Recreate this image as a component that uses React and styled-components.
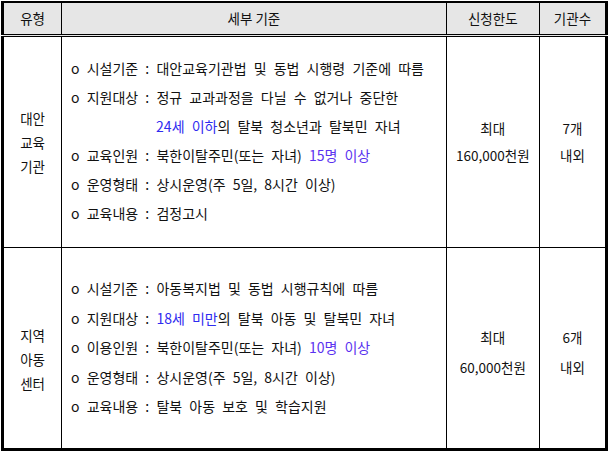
import React from "react";
import styled, { createGlobalStyle } from "styled-components";

const Global = createGlobalStyle`
  html, body { margin: 0; padding: 0; background: #fff; }
  body { font-family: "Noto Sans CJK KR", "Noto Sans", sans-serif; color: #111; }
`;

const Page = styled.div`
  padding: 1px 0 0 1px;
`;

const Table = styled.table`
  border-collapse: collapse;
  table-layout: fixed;
  width: 607px;
  border-left: 3px solid #000;
  border-right: 3px solid #000;
  border-top: 2px solid #000;
  border-bottom: 3px solid #000;
  font-size: 13.5px;
`;

const Th = styled.th`
  background: #e6e6e6;
  font-weight: 400;
  height: 31px;
  padding: 0;
  text-align: center;
  border-left: 1px solid #000;
  border-bottom: 3px double #000;
  line-height: 1;
  &:first-child { border-left: none; }
`;

const Td = styled.td`
  border-left: 1px solid #000;
  border-top: 1px solid #000;
  padding: 0;
  vertical-align: middle;
  text-align: center;
  height: ${(p) => p.$h}px;
  &:first-child { border-left: none; }
`;

const Stack = styled.div`
  display: flex;
  flex-direction: column;
  align-items: center;
  line-height: ${(p) => p.$lh}px;
  transform: translateY(${(p) => p.$dy || 0}px);
`;

const Content = styled.div`
  display: flex;
  flex-direction: column;
  text-align: left;
  padding-left: 9px;
  font-size: 14px;
  line-height: ${(p) => p.$lh}px;
  word-spacing: 4px;
  transform: translateY(${(p) => p.$dy || 0}px);
`;

const Line = styled.div`
  white-space: nowrap;
  padding-left: ${(p) => p.$indent || 0}px;
`;

const Age = styled.span`
  color: #2f2cf0;
`;

const Count = styled.span`
  color: #5a32f0;
`;

const rows = [
  {
    type: ["대안", "교육", "기관"],
    height: 210,
    lh: 29,
    contentDy: -1,
    lines: [
      <>o 시설기준 : 대안교육기관법 및 동법 시행령 기준에 따름</>,
      <>o 지원대상 : 정규 교과과정을 다닐 수 없거나 중단한</>,
      { indent: 85, node: <><Age>24세 이하</Age>의 탈북 청소년과 탈북민 자녀</> },
      <>o 교육인원 : 북한이탈주민(또는 자녀) <Count>15명 이상</Count></>,
      <>o 운영형태 : 상시운영(주 5일, 8시간 이상)</>,
      <>o 교육내용 : 검정고시</>,
    ],
    limit: ["최대", "160,000천원"],
    limitLh: 27,
    count: ["7개", "내외"],
  },
  {
    type: ["지역", "아동", "센터"],
    height: 200,
    lh: 29.5,
    typeDy: 11,
    lines: [
      <>o 시설기준 : 아동복지법 및 동법 시행규칙에 따름</>,
      <>o 지원대상 : <Age>18세 미만</Age>의 탈북 아동 및 탈북민 자녀</>,
      <>o 이용인원 : 북한이탈주민(또는 자녀) <Count>10명 이상</Count></>,
      <>o 운영형태 : 상시운영(주 5일, 8시간 이상)</>,
      <>o 교육내용 : 탈북 아동 보호 및 학습지원</>,
    ],
    limit: ["최대", "60,000천원"],
    limitLh: 30,
    limitDy: 4,
    count: ["6개", "내외"],
  },
];

export default function App() {
  return (
    <Page>
      <Global />
      <Table>
        <colgroup>
          <col style={{ width: 59 }} />
          <col style={{ width: 384 }} />
          <col style={{ width: 93 }} />
          <col style={{ width: 67 }} />
        </colgroup>
        <thead>
          <tr>
            <Th>유형</Th>
            <Th>세부 기준</Th>
            <Th>신청한도</Th>
            <Th>기관수</Th>
          </tr>
        </thead>
        <tbody>
          {rows.map((r, i) => (
            <tr key={i}>
              <Td $h={r.height}>
                <Stack $lh={24} $dy={r.typeDy}>
                  {r.type.map((t) => (
                    <span key={t}>{t}</span>
                  ))}
                </Stack>
              </Td>
              <Td $h={r.height}>
                <Content $lh={r.lh} $dy={r.contentDy}>
                  {r.lines.map((l, j) =>
                    l && l.node ? (
                      <Line key={j} $indent={l.indent}>
                        {l.node}
                      </Line>
                    ) : (
                      <Line key={j}>{l}</Line>
                    )
                  )}
                </Content>
              </Td>
              <Td $h={r.height}>
                <Stack $lh={r.limitLh} $dy={r.limitDy}>
                  {r.limit.map((t) => (
                    <span key={t}>{t}</span>
                  ))}
                </Stack>
              </Td>
              <Td $h={r.height}>
                <Stack $lh={r.limitLh} $dy={r.limitDy}>
                  {r.count.map((t) => (
                    <span key={t}>{t}</span>
                  ))}
                </Stack>
              </Td>
            </tr>
          ))}
        </tbody>
      </Table>
    </Page>
  );
}
